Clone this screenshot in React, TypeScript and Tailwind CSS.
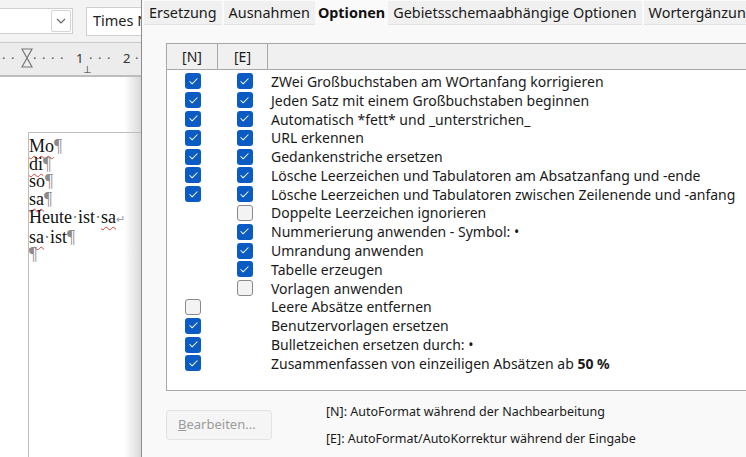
import { Check } from 'lucide-react'

type Row = { n: boolean | null; e: boolean | null; label: React.ReactNode }

const rows: Row[] = [
  { n: true, e: true, label: 'ZWei Großbuchstaben am WOrtanfang korrigieren' },
  { n: true, e: true, label: 'Jeden Satz mit einem Großbuchstaben beginnen' },
  { n: true, e: true, label: 'Automatisch *fett* und _unterstrichen_' },
  { n: true, e: true, label: 'URL erkennen' },
  { n: true, e: true, label: 'Gedankenstriche ersetzen' },
  { n: true, e: true, label: 'Lösche Leerzeichen und Tabulatoren am Absatzanfang und -ende' },
  { n: true, e: true, label: 'Lösche Leerzeichen und Tabulatoren zwischen Zeilenende und -anfang' },
  { n: null, e: false, label: 'Doppelte Leerzeichen ignorieren' },
  { n: null, e: true, label: 'Nummerierung anwenden - Symbol: •' },
  { n: null, e: true, label: 'Umrandung anwenden' },
  { n: null, e: true, label: 'Tabelle erzeugen' },
  { n: null, e: false, label: 'Vorlagen anwenden' },
  { n: false, e: null, label: 'Leere Absätze entfernen' },
  { n: true, e: null, label: 'Benutzervorlagen ersetzen' },
  { n: true, e: null, label: 'Bulletzeichen ersetzen durch: •' },
  {
    n: true,
    e: null,
    label: (
      <>
        Zusammenfassen von einzeiligen Absätzen ab <b>50 %</b>
      </>
    ),
  },
]

function Box({ checked }: { checked: boolean | null }) {
  if (checked === null) return <span className="w-4 h-4" />
  if (checked)
    return (
      <span className="flex w-4 h-4 items-center justify-center rounded-[3px] bg-[#0a5bc4]">
        <Check size={11} strokeWidth={2.2} className="text-white" />
      </span>
    )
  return <span className="w-4 h-4 rounded-[3px] border border-[#8a8a8a] bg-[#f3f3f3]" />
}

const tabs = ['Ersetzung', 'Ausnahmen', 'Optionen', 'Gebietsschemaabhängige Optionen', 'Wortergänzung']

function Squig({ children }: { children: React.ReactNode }) {
  return <span className="underline decoration-wavy decoration-[#e0403a] decoration-1 underline-offset-[3px]">{children}</span>
}

function P() {
  return <span className="text-[#8a8a8a]">¶</span>
}

export default function App() {
  return (
    <div className="flex w-[746px] h-[457px] overflow-hidden bg-white" style={{ fontFamily: '"Noto Sans", "Open Sans", sans-serif' }}>
      {/* writer window behind */}
      <div className="flex flex-col w-[141px] shrink-0">
        <div className="flex items-center gap-[13px] h-[43px] bg-[#f3f3f3] border-b border-[#c8c8c8]">
          <div className="flex h-[26px] w-[74px] -ml-[1px] items-center justify-end border border-[#cfcfcf] bg-white pr-[1px]">
            <div className="flex h-[22px] w-[20px] items-center justify-center rounded-[2px] border border-[#d4d4d4]">
              <svg width="10" height="6" viewBox="0 0 10 6"><path d="M1 1l4 4 4-4" fill="none" stroke="#666" strokeWidth="1.2" /></svg>
            </div>
          </div>
          <div className="flex h-[29px] flex-1 items-center overflow-hidden whitespace-nowrap border border-[#cfcfcf] border-r-0 bg-white pl-[6px] text-[14.5px] text-[#222]">
            Times N
          </div>
        </div>
        <div className="relative h-[34px] bg-[#ececec] border-b-2 border-[#bdbdbd] text-[13px] text-[#333]">
          <div className="flex h-full items-center whitespace-nowrap pl-[2px] text-[#555]">
            <span className="w-[9px]">·</span>
            <span className="w-[22px]">·</span>
            <span className="w-[9px]">·</span>
            <span className="w-[9px]">·</span>
            <span className="w-[9px]">·</span>
            <span className="w-[16px]">·</span>
            <span className="w-[13px] text-[#333]">1</span>
            <span className="w-[9px]">·</span>
            <span className="w-[9px]">·</span>
            <span className="w-[16px]">·</span>
            <span className="w-[12px] text-[#333]">2</span>
            <span>·</span>
          </div>
          <svg width="12" height="20" viewBox="0 0 12 20" className="absolute left-[21px] top-[5px]">
            <path d="M1 1h10L6 10l5 9H1l5-9z" fill="#eee" stroke="#777" strokeWidth="1.2" />
          </svg>
          <span className="absolute left-[83px] top-[21px] text-[10px] leading-none text-[#333]">⊥</span>
        </div>
        <div className="flex-1 bg-gradient-to-r from-white from-[88%] to-[#d9d9d9] pt-[55px] pl-[28px]">
          <div
            className="border-l border-t border-[#bdbdbd] h-full pt-[5px] text-[18px] leading-[17.7px] text-[#111]"
            style={{ fontFamily: '"Liberation Serif", serif' }}
          >
            <div><Squig>Mo</Squig><P /></div>
            <div><Squig>di</Squig><P /></div>
            <div>so<P /></div>
            <div><Squig>sa</Squig><P /></div>
            <div className="whitespace-nowrap">Heute<span className="text-[#888]">·</span>ist<span className="text-[#888]">·</span><Squig>sa</Squig><span className="text-[11px] text-[#999]">↵</span></div>
            <div><Squig>sa</Squig><span className="text-[#888]">·</span>ist<P /></div>
            <div><P /></div>
          </div>
        </div>
      </div>

      {/* dialog */}
      <div className="flex flex-1 flex-col border-l border-[#8c8c8c] bg-[#f9f9f9] text-[14px] text-[#1a1a1a]">
        <div className="flex h-[25px] shrink-0 items-stretch gap-[2px] bg-[#fafafa] pl-[2px] pt-[1px] whitespace-nowrap text-[14.4px]">
          {tabs.map((t) => (
            <div
              key={t}
              className={
                t === 'Optionen'
                  ? 'flex items-center px-[1px] font-bold text-[#111] bg-[#fafafa]'
                  : 'flex items-center px-[5px] bg-[#f0f0f0] border-b border-[#e2e2e2]'
              }
            >
              {t}
            </div>
          ))}
        </div>
        <div className="flex flex-1 flex-col pl-[24px] pt-[18px]">
          <div className="flex h-[348px] flex-col border border-r-0 border-[#a8a8a8] bg-white">
            <div className="flex h-[26px] shrink-0 border-b border-[#a8a8a8] bg-[#f0f0f0]">
              <div className="flex w-[51px] items-center justify-center border-r border-[#a8a8a8]">[N]</div>
              <div className="flex w-[50px] items-center justify-center border-r border-[#a8a8a8]">[E]</div>
              <div className="flex-1" />
            </div>
            <div className="pt-[2px]">
              {rows.map((r, i) => (
                <div key={i} className="flex h-[18.8px] items-center whitespace-nowrap">
                  <div className="flex w-[51px] justify-center pl-[1px]"><Box checked={r.n} /></div>
                  <div className="flex w-[50px] justify-center pl-[3px]"><Box checked={r.e} /></div>
                  <div className="pl-[3px]">{r.label}</div>
                </div>
              ))}
            </div>
          </div>
          <div className="flex pt-[12px]">
            <div className="pt-[7px]">
              <div className="flex h-[30px] w-[106px] items-center rounded-[4px] border border-[#e2e2e2] bg-[#f5f5f5] pl-[11px] text-[13px] text-[#9a9a9a]">
                <span className="underline">B</span>earbeiten...
              </div>
            </div>
            <div className="flex flex-col gap-[8px] pl-[54px] text-[12.5px] text-[#1a1a1a]">
              <div>[N]: AutoFormat während der Nachbearbeitung</div>
              <div>[E]: AutoFormat/AutoKorrektur während der Eingabe</div>
            </div>
          </div>
        </div>
      </div>
    </div>
  )
}
